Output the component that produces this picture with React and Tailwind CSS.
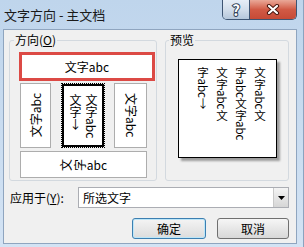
export default function App() {
  return (
    <div className="w-[304px] h-[247px] flex flex-col overflow-hidden bg-gradient-to-b from-[#bfd5ec] via-[#c9dcf0] to-[#d3e3f4] border-r border-[#8ba3bf] font-['Noto_Sans_CJK_SC','Liberation_Sans',sans-serif] text-black select-none">
      {/* Title bar */}
      <div className="h-[29px] shrink-0 flex items-start justify-between">
        <span className="pl-[4px] text-[13px] leading-[29px] text-[#1a1a1a]">文字方向 - 主文档</span>
        <div className="mr-[6px] flex border border-t-0 border-[#3d5573] rounded-b-[5px] overflow-hidden">
          <div className="w-[27px] h-[19px] border-r border-[#3d5573] bg-gradient-to-b from-[#e6eef7] via-[#d2deeb] to-[#b5c7db] flex items-center justify-center">
            <span className="text-[15px] font-bold leading-none text-white [-webkit-text-stroke:2px_#34455b] [paint-order:stroke_fill]">?</span>
          </div>
          <div className="w-[46px] h-[19px] bg-gradient-to-b from-[#e9a898] via-[#d15a45] to-[#c64a36] flex items-center justify-center">
            <svg width="14" height="11" viewBox="0 0 14 11">
              <path d="M3 2L11 9M11 2L3 9" stroke="#4a1810" strokeWidth="4.2" strokeLinecap="round" />
              <path d="M3 2L11 9M11 2L3 9" stroke="#ffffff" strokeWidth="2.2" strokeLinecap="round" />
            </svg>
          </div>
        </div>
      </div>

      {/* Client area */}
      <div className="flex-1 ml-[3px] mr-[6px] mb-[3px] border border-[#8fa5bf] bg-[#f0f0f0] flex flex-col pl-[5px] pr-[7px] pt-[3px] text-[12px]">
        <div className="flex gap-[8px]">
          {/* Direction group */}
          <fieldset className="w-[148px] h-[148px] border border-[#d3d9df] rounded-[3px]">
            <legend className="ml-[4px] px-[1px] leading-[14px]">
              方向(<span className="underline underline-offset-[1px]">O</span>)
            </legend>
            <div className="ml-[9px] mt-[5px] w-[136px] h-[29px] border-[3px] border-[#dc4a45] bg-white flex items-center justify-center leading-none">
              文字abc
            </div>
            <div className="ml-[10px] w-[127px] mt-[2px] h-[65px] flex items-center">
              <div className="w-[31px] h-[65px] border border-[#adadad] bg-white flex items-center justify-center">
                <span className="[writing-mode:vertical-rl] [text-orientation:sideways] rotate-180 leading-none">文字abc</span>
              </div>
              <div className="ml-[11px] w-[42px] h-[63px] border-2 border-black outline outline-1 outline-dotted outline-black bg-white flex justify-center pt-[8px]">
                <div className="[writing-mode:vertical-rl] leading-[16px]">
                  文字abc
                  <br />
                  文字<span className="[text-orientation:upright]">↓</span>
                </div>
              </div>
              <div className="ml-[10px] w-[33px] h-[65px] border border-[#adadad] bg-white flex items-center justify-center">
                <span className="[writing-mode:vertical-rl] [text-orientation:sideways] leading-none">文字abc</span>
              </div>
            </div>
            <div className="ml-[10px] w-[127px] mt-[3px] h-[27px] border border-[#adadad] bg-white flex items-center justify-center leading-none">
              <span className="w-[12px] h-[12px] flex items-center justify-center -rotate-90">文</span>
              <span className="w-[12px] h-[12px] ml-[2px] flex items-center justify-center -rotate-90">字</span>
              <span className="ml-[1px]">abc</span>
            </div>
          </fieldset>

          {/* Preview group */}
          <fieldset className="w-[124px] h-[148px] border border-[#d3d9df] rounded-[3px]">
            <legend className="ml-[3px] px-[1px] leading-[14px]">预览</legend>
            <div className="ml-[12px] mt-[12px] w-[99px] h-[99px] bg-white border border-black shadow-[3px_3px_2px_rgba(0,0,0,0.35)] pt-[7px] pr-[7px]">
              <div className="w-full h-full [writing-mode:vertical-rl] leading-[19px] text-[11.5px]">
                文字abc文
                <br />
                字abc文字abc
                <br />
                文字abc文
                <br />
                字abc<span className="[text-orientation:upright]">↓</span>
              </div>
            </div>
          </fieldset>
        </div>

        {/* Apply to */}
        <div className="mt-[6px] flex items-center h-[21px]">
          <span className="w-[69px] pl-[1px] leading-none">
            应用于(<span className="underline underline-offset-[1px]">Y</span>):
          </span>
          <div className="flex-1 h-full bg-white border border-[#abadb3] flex items-center">
            <span className="pl-[4px] flex-1 leading-none">所选文字</span>
            <div className="w-[15px] h-full bg-gradient-to-b from-[#f4f4f4] to-[#d6d6d6] border-l border-[#c9c9c9] flex items-center justify-center">
              <svg width="7" height="4" viewBox="0 0 7 4">
                <path d="M0 0H7L3.5 4Z" fill="#000" />
              </svg>
            </div>
          </div>
        </div>

        {/* Buttons */}
        <div className="mt-[10px] flex justify-end gap-[11px]">
          <div className="w-[74px] h-[21px] rounded-[3px] border border-[#3c7fb1] bg-gradient-to-b from-[#f4f4f4] to-[#dcdcdc] shadow-[inset_0_0_0_1px_#bde6f8] flex items-center justify-center leading-none">
            确定
          </div>
          <div className="w-[72px] h-[21px] rounded-[3px] border border-[#707070] bg-gradient-to-b from-[#f6f6f6] to-[#d8d8d8] flex items-center justify-center leading-none">
            取消
          </div>
        </div>
      </div>
    </div>
  );
}
